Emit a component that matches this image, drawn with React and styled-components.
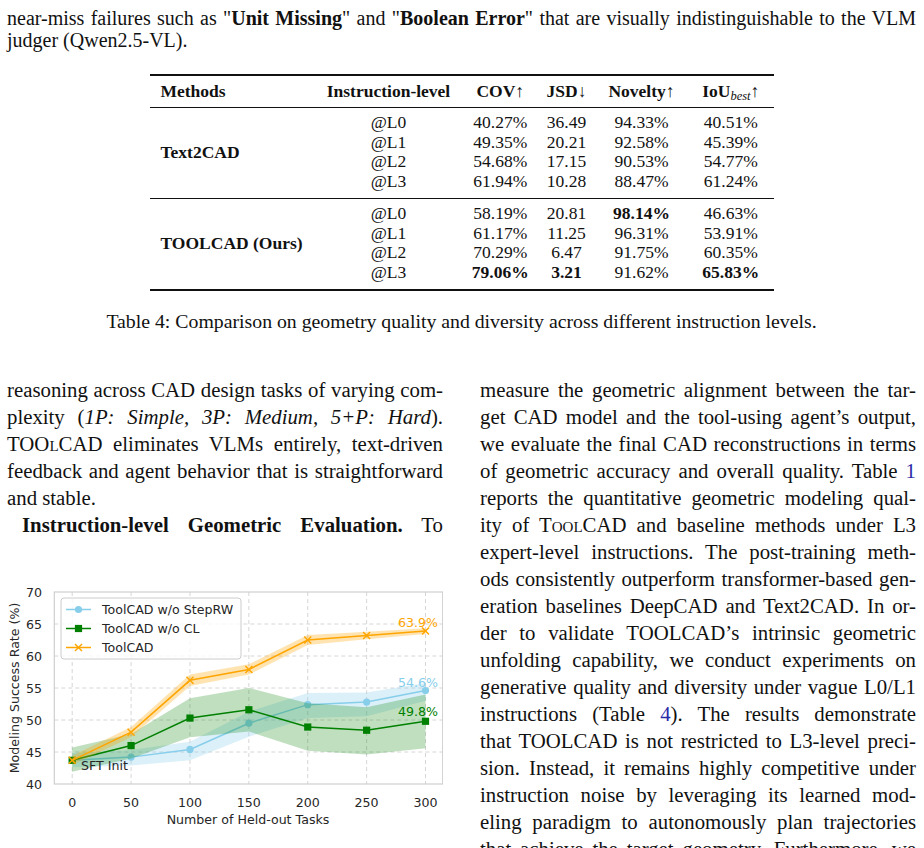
import React from 'react';
import styled, { createGlobalStyle } from 'styled-components';

const GlobalStyle = createGlobalStyle`
  html, body { margin: 0; padding: 0; background: #fff; }
`;

const Page = styled.div`
  width: 924px;
  height: 848px;
  overflow: hidden;
  box-sizing: border-box;
  padding: 7px 8px 0 7px;
  font-family: "Liberation Serif", "Times New Roman", serif;
  color: #111;
`;

const TopPara = styled.div`
  font-size: 20px;
  line-height: 22px;
`;

const Line = styled.div`
  text-align: justify;
  text-align-last: ${p => (p.$last ? 'left' : 'justify')};
  padding-left: ${p => p.$indent || 0}px;
`;

const B = styled.b`font-weight: bold;`;
const I = styled.i`font-style: italic;`;
const Link = styled.span`color: #2a2aa8;`;
const SmallCap = styled.span`font-variant: small-caps;`;

const Table = styled.table`
  margin: 23px auto 0;
  border-collapse: collapse;
  table-layout: fixed;
  width: 624px;
  font-size: 17.5px;
  border-top: 2px solid #111;
  border-bottom: 2px solid #111;
`;

const HeadCell = styled.th`
  height: 31px;
  padding: 0 0 0 ${p => (p.$left ? 11 : 0)}px;
  font-weight: bold;
  text-align: ${p => (p.$left ? 'left' : 'center')};
  vertical-align: middle;
  white-space: nowrap;
  border-bottom: 1px solid #111;
`;

const Arrow = styled.span`font-weight: normal;`;

const Sub = styled.sub`
  font-size: 12.5px;
  font-style: italic;
  font-weight: normal;
  vertical-align: -3px;
  line-height: 0;
`;

const Group = styled.tbody`
  & + & { border-top: 1px solid #111; }
`;

const Cell = styled.td`
  padding: ${p => p.$pt || 0}px 0 ${p => p.$pb || 0}px;
  line-height: 19.7px;
  text-align: center;
  white-space: nowrap;
  font-weight: ${p => (p.$bold ? 'bold' : 'normal')};
`;

const MethodCell = styled.td`
  padding: 0 0 0 11px;
  text-align: left;
  vertical-align: middle;
  font-weight: bold;
  white-space: nowrap;
  line-height: 19.7px;
`;

const Caption = styled.div`
  margin-top: 19.5px;
  font-size: 19.8px;
  line-height: 22px;
  text-align: center;
`;

const Columns = styled.div`
  display: grid;
  grid-template-columns: 436px 436px;
  align-items: start;
  column-gap: 37px;
  margin-top: 44px;
  font-size: 20.8px;
  line-height: 27px;
`;

const Column = styled.div`
  display: flex;
  flex-direction: column;
`;

const ChartSvg = styled.svg`
  display: block;
  flex-shrink: 0;
  font-family: "DejaVu Sans", sans-serif;
`;

const groups = [
  {
    name: 'Text2CAD',
    rows: [
      ['@L0', '40.27%', '36.49', '94.33%', '40.51%'],
      ['@L1', '49.35%', '20.21', '92.58%', '45.39%'],
      ['@L2', '54.68%', '17.15', '90.53%', '54.77%'],
      ['@L3', '61.94%', '10.28', '88.47%', '61.24%'],
    ],
  },
  {
    name: 'TOOLCAD (Ours)',
    rows: [
      ['@L0', '58.19%', '20.81', '98.14%', '46.63%'],
      ['@L1', '61.17%', '11.25', '96.31%', '53.91%'],
      ['@L2', '70.29%', '6.47', '91.75%', '60.35%'],
      ['@L3', '79.06%', '3.21', '91.62%', '65.83%'],
    ],
    bold: { '0-3': 1, '3-1': 1, '3-2': 1, '3-4': 1 },
  },
];

// chart is drawn in page coordinates, the viewBox starts where the svg sits
const CHART_TOP = 538;
const tasks = [0, 50, 100, 150, 200, 250, 300];
const X = t => 72.2 + t * 1.1777;
const Y = v => 784 - (v - 40) * 6.4;

const series = [
  {
    color: '#87ceeb',
    marker: 'o',
    label: 'ToolCAD w/o StepRW',
    alpha: 0.3,
    mean: [43.7, 44.2, 45.4, 49.5, 52.4, 52.8, 54.6],
    lo: [42.6, 42.9, 43.7, 47.4, 50.3, 50.6, 53.0],
    hi: [44.8, 45.3, 46.6, 51.3, 54.2, 54.3, 55.8],
  },
  {
    color: '#008000',
    marker: 's',
    label: 'ToolCAD w/o CL',
    alpha: 0.25,
    mean: [43.7, 46.0, 50.3, 51.6, 48.9, 48.4, 49.8],
    lo: [41.9, 44.0, 47.3, 48.2, 45.2, 44.6, 45.6],
    hi: [45.7, 47.8, 53.4, 55.0, 52.6, 52.0, 54.0],
  },
  {
    color: '#ffa500',
    marker: 'x',
    label: 'ToolCAD',
    alpha: 0.3,
    mean: [43.7, 48.1, 56.2, 57.9, 62.5, 63.2, 63.9],
    lo: [43.0, 47.3, 55.3, 57.1, 61.7, 62.6, 63.45],
    hi: [44.4, 48.9, 57.1, 58.7, 63.3, 63.8, 64.35],
  },
];

function Marker({ kind, x, y, color }) {
  if (kind === 'o') return <circle cx={x} cy={y} r={3.6} fill={color} />;
  if (kind === 's') return <rect x={x - 3.6} y={y - 3.6} width={7.2} height={7.2} fill={color} />;
  return (
    <g stroke={color} strokeWidth={1.5}>
      <line x1={x - 3.5} y1={y - 3.5} x2={x + 3.5} y2={y + 3.5} />
      <line x1={x - 3.5} y1={y + 3.5} x2={x + 3.5} y2={y - 3.5} />
    </g>
  );
}

function Chart() {
  const tickColor = '#262626';
  const h = 848 - CHART_TOP;
  return (
    <ChartSvg width={436} height={h} viewBox={`7 ${CHART_TOP} 436 ${h}`}>
      <rect x={54.3} y={592} width={388.4} height={192} fill="#fff" />
      {tasks.map(t => (
        <line key={'gx' + t} x1={X(t)} x2={X(t)} y1={592} y2={784} stroke="#d6d6d6" strokeDasharray="4 3" />
      ))}
      {[45, 50, 55, 60, 65].map(v => (
        <line key={'gy' + v} x1={54.3} x2={442.7} y1={Y(v)} y2={Y(v)} stroke="#d6d6d6" strokeDasharray="4 3" />
      ))}
      <rect x={54.3} y={592} width={388.4} height={192} fill="none" stroke="#cfcfcf" strokeWidth={1.2} />

      {series.map(s => {
        const band =
          tasks.map((t, i) => `${X(t)},${Y(s.hi[i])}`).join(' ') +
          ' ' +
          tasks.map((t, i) => `${X(t)},${Y(s.lo[i])}`).reverse().join(' ');
        const line = tasks.map((t, i) => `${X(t)},${Y(s.mean[i])}`).join(' ');
        return (
          <g key={s.label}>
            <polygon points={band} fill={s.color} fillOpacity={s.alpha} />
            <polyline points={line} fill="none" stroke={s.color} strokeWidth={1.5} />
            {tasks.map((t, i) => (
              <Marker key={t} kind={s.marker} x={X(t)} y={Y(s.mean[i])} color={s.color} />
            ))}
          </g>
        );
      })}

      <g fontSize={12.6} fill={tickColor}>
        {[40, 45, 50, 55, 60, 65, 70].map(v => (
          <text key={'ty' + v} x={42} y={Y(v) + 4.6} textAnchor="end">{v}</text>
        ))}
        {tasks.map(t => (
          <text key={'tx' + t} x={X(t)} y={806.5} textAnchor="middle">{t}</text>
        ))}
        <text x={248} y={823.5} textAnchor="middle">Number of Held-out Tasks</text>
        <text x={18.5} y={688} textAnchor="middle" transform="rotate(-90 18.5 688)">
          Modeling Success Rate (%)
        </text>
        <text x={81} y={770}>SFT Init</text>
      </g>

      <g fontSize={12.6}>
        <text x={418} y={626.7} textAnchor="middle" fill="#ffa500">63.9%</text>
        <text x={418} y={686.5} textAnchor="middle" fill="#87ceeb">54.6%</text>
        <text x={418} y={716} textAnchor="middle" fill="#008000">49.8%</text>
      </g>

      <rect x={61} y={598} width={180} height={61} rx={3} fill="#fff" fillOpacity={0.8} stroke="#cccccc" />
      {series.map((s, i) => {
        const y = 609.5 + i * 19;
        return (
          <g key={'lg' + s.label}>
            <line x1={66} x2={91} y1={y} y2={y} stroke={s.color} strokeWidth={1.5} />
            <Marker kind={s.marker} x={78.5} y={y} color={s.color} />
            <text x={102} y={y + 4.6} fontSize={12.6} fill={tickColor}>{s.label}</text>
          </g>
        );
      })}
    </ChartSvg>
  );
}

export default function App() {
  return (
    <Page>
      <GlobalStyle />
      <TopPara>
        <Line>
          near-miss failures such as "<B>Unit Missing</B>" and "<B>Boolean Error</B>" that are visually indistinguishable to the VLM
        </Line>
        <Line $last>judger (Qwen2.5-VL).</Line>
      </TopPara>

      <Table>
        <colgroup>
          <col style={{ width: 165 }} />
          <col style={{ width: 148 }} />
          <col style={{ width: 75.5 }} />
          <col style={{ width: 57 }} />
          <col style={{ width: 93 }} />
          <col style={{ width: 85.5 }} />
        </colgroup>
        <thead>
          <tr>
            <HeadCell $left>Methods</HeadCell>
            <HeadCell>Instruction-level</HeadCell>
            <HeadCell>COV<Arrow>↑</Arrow></HeadCell>
            <HeadCell>JSD<Arrow>↓</Arrow></HeadCell>
            <HeadCell>Novelty<Arrow>↑</Arrow></HeadCell>
            <HeadCell>IoU<Sub>best</Sub><Arrow>↑</Arrow></HeadCell>
          </tr>
        </thead>
        {groups.map(g => (
          <Group key={g.name}>
            {g.rows.map((row, ri) => (
              <tr key={row[0]}>
                {ri === 0 && <MethodCell rowSpan={4}>{g.name}</MethodCell>}
                {row.map((v, ci) => (
                  <Cell
                    key={ci}
                    $pt={ri === 0 ? 5 : 0}
                    $pb={ri === 3 ? 6 : 0}
                    $bold={g.bold && g.bold[`${ri}-${ci}`]}
                  >
                    {v}
                  </Cell>
                ))}
              </tr>
            ))}
          </Group>
        ))}
      </Table>

      <Caption>Table 4: Comparison on geometry quality and diversity across different instruction levels.</Caption>

      <Columns>
        <Column>
          <Line>reasoning across CAD design tasks of varying com-</Line>
          <Line>plexity (<I>1P: Simple, 3P: Medium, 5+P: Hard</I>).</Line>
          <Line>TOO<SmallCap>l</SmallCap>CAD eliminates VLMs entirely, text-driven</Line>
          <Line>feedback and agent behavior that is straightforward</Line>
          <Line $last>and stable.</Line>
          <Line $indent={15}><B>Instruction-level Geometric Evaluation.</B> To</Line>
          <Chart />
        </Column>
        <Column>
          <Line>measure the geometric alignment between the tar-</Line>
          <Line>get CAD model and the tool-using agent’s output,</Line>
          <Line>we evaluate the final CAD reconstructions in terms</Line>
          <Line>of geometric accuracy and overall quality. Table <Link>1</Link></Line>
          <Line>reports the quantitative geometric modeling qual-</Line>
          <Line>ity of T<SmallCap>ool</SmallCap>CAD and baseline methods under L3</Line>
          <Line>expert-level instructions. The post-training meth-</Line>
          <Line>ods consistently outperform transformer-based gen-</Line>
          <Line>eration baselines DeepCAD and Text2CAD. In or-</Line>
          <Line>der to validate TOOLCAD’s intrinsic geometric</Line>
          <Line>unfolding capability, we conduct experiments on</Line>
          <Line>generative quality and diversity under vague L0/L1</Line>
          <Line>instructions (Table <Link>4</Link>). The results demonstrate</Line>
          <Line>that TOOLCAD is not restricted to L3-level preci-</Line>
          <Line>sion. Instead, it remains highly competitive under</Line>
          <Line>instruction noise by leveraging its learned mod-</Line>
          <Line>eling paradigm to autonomously plan trajectories</Line>
          <Line>that achieve the target geometry. Furthermore, we</Line>
        </Column>
      </Columns>
    </Page>
  );
}
